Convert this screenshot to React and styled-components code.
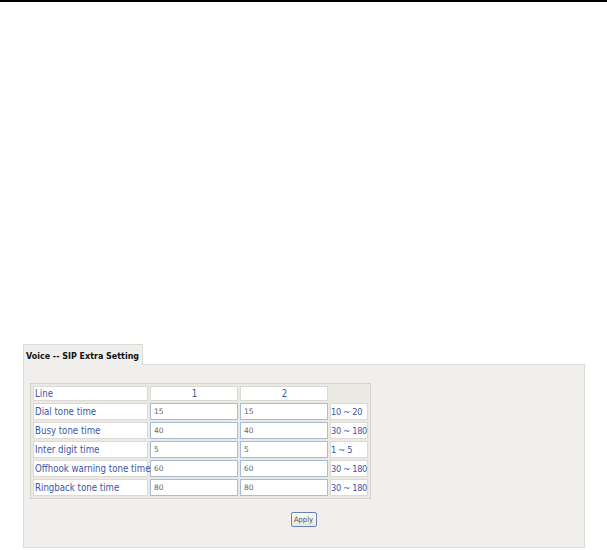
import React from "react";
import styled, { createGlobalStyle } from "styled-components";

const GlobalStyle = createGlobalStyle`
  body {
    margin: 0;
    background: #ffffff;
    font-family: "DejaVu Sans", Verdana, sans-serif;
  }
`;

const Page = styled.div`
  width: 607px;
  height: 550px;
  border-top: 2px solid #000;
  box-sizing: border-box;
  padding: 342px 0 0 23px;
`;

const Tab = styled.div`
  width: 120px;
  height: 21px;
  box-sizing: border-box;
  background: #f0efed;
  border: 1px solid #dddbd5;
  border-bottom: none;
  padding: 6px 0 0 2px;
  font-family: "DejaVu Sans Condensed", "DejaVu Sans", sans-serif;
  font-size: 8.9px;
  font-weight: bold;
  color: #111;
  white-space: nowrap;
  position: relative;
  z-index: 1;
  margin-bottom: -1px;
`;

const Panel = styled.div`
  width: 562px;
  height: 184px;
  box-sizing: border-box;
  background: #f0efed;
  border: 1px solid #dddbd5;
  padding: 18px 0 0 6px;
`;

const Table = styled.table`
  border-collapse: separate;
  border-spacing: 2px;
  background: #ebe9e4;
  border: 1px solid #d6d3cc;
  font-size: 9.6px;
  color: #3a55a8;
  table-layout: fixed;
  width: 341px;
`;

const Cell = styled.td`
  background: ${(p) => (p.$blank ? "transparent" : "#fff")};
  border: 1px solid ${(p) => (p.$blank ? "transparent" : "#dcdad4")};
  height: 15px;
  padding: 0 0 0 1px;
  text-align: ${(p) => (p.$center ? "center" : "left")};
  white-space: nowrap;
  overflow: visible;
  box-sizing: border-box;
  font-family: "DejaVu Sans Condensed", "DejaVu Sans", sans-serif;
`;

const RangeCell = styled(Cell)`
  padding: 0;
  font-size: 9.2px;
  letter-spacing: -0.3px;
`;

const InputCell = styled.td`
  padding: 0;
`;

const Field = styled.input`
  display: block;
  width: 88px;
  height: 17px;
  box-sizing: border-box;
  border: 1px solid #a9bcd7;
  font-family: "DejaVu Sans", sans-serif;
  font-size: 7.5px;
  color: #666;
  padding: 0 0 0 3px;
  margin: 0;
  outline: none;
`;

const Actions = styled.div`
  width: 547px;
  display: flex;
  justify-content: center;
  padding-top: 13px;
`;

const Button = styled.button`
  width: 26px;
  height: 15px;
  box-sizing: border-box;
  padding: 0;
  border: 1px solid #6682b6;
  border-radius: 2px;
  background: linear-gradient(#fbfbf9, #e7e6df);
  font-family: "DejaVu Sans Condensed", "DejaVu Sans", sans-serif;
  font-size: 7.5px;
  color: #555;
`;

const rows = [
  { label: "Dial tone time", v1: "15", v2: "15", range: "10 ~ 20" },
  { label: "Busy tone time", v1: "40", v2: "40", range: "30 ~ 180" },
  { label: "Inter digit time", v1: "5", v2: "5", range: "1 ~ 5" },
  { label: "Offhook warning tone time", v1: "60", v2: "60", range: "30 ~ 180" },
  { label: "Ringback tone time", v1: "80", v2: "80", range: "30 ~ 180" },
];

export default function App() {
  return (
    <>
      <GlobalStyle />
      <Page>
        <Tab>Voice -- SIP Extra Setting</Tab>
        <Panel>
          <Table>
            <colgroup>
              <col style={{ width: 115 }} />
              <col style={{ width: 88 }} />
              <col style={{ width: 88 }} />
              <col style={{ width: 38 }} />
            </colgroup>
            <tbody>
              <tr>
                <Cell>Line</Cell>
                <Cell $center>1</Cell>
                <Cell $center>2</Cell>
                <Cell $blank />
              </tr>
              {rows.map((r) => (
                <tr key={r.label}>
                  <Cell>{r.label}</Cell>
                  <InputCell>
                    <Field defaultValue={r.v1} />
                  </InputCell>
                  <InputCell>
                    <Field defaultValue={r.v2} />
                  </InputCell>
                  <RangeCell>{r.range}</RangeCell>
                </tr>
              ))}
            </tbody>
          </Table>
          <Actions>
            <Button>Apply</Button>
          </Actions>
        </Panel>
      </Page>
    </>
  );
}
